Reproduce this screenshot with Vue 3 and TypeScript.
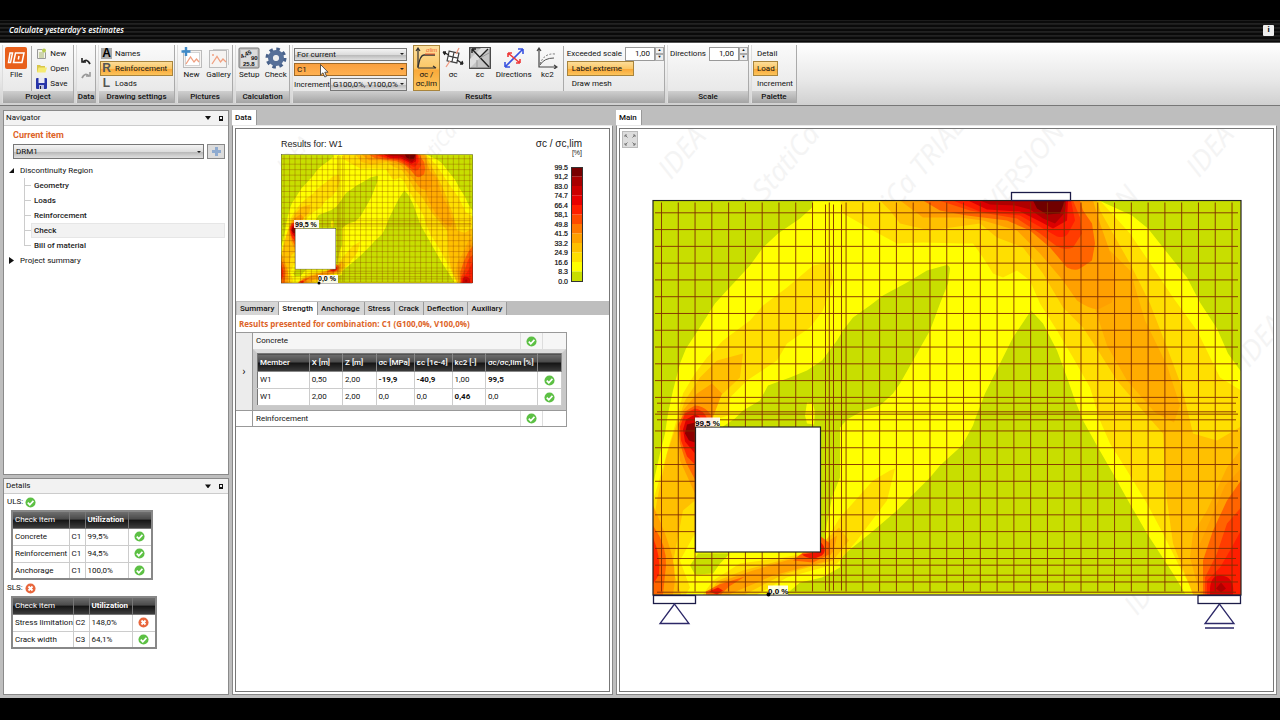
<script setup lang="ts">
import { ref } from 'vue'

type Cell = { text: string; bold?: boolean }
type Check = { name: string; combo: string; value: string; ok: boolean }
type Band = { fill: string; d: string }

const titleNote = "Calculate yesterday's estimates"
const exceeded = ref('1,00')
const directions = ref('1,00')
const scope = ref('For current')
const combination = ref('C1')
const increment = ref('G100,0%, V100,0%')
const item = ref('DRM1')

const regionItems = ['Geometry', 'Loads', 'Reinforcement', 'Check', 'Bill of material']
const resultTabs = ['Summary', 'Strength', 'Anchorage', 'Stress', 'Crack', 'Deflection', 'Auxiliary']

const uls: Check[] = [
  { name: 'Concrete', combo: 'C1', value: '99,5%', ok: true },
  { name: 'Reinforcement', combo: 'C1', value: '94,5%', ok: true },
  { name: 'Anchorage', combo: 'C1', value: '100,0%', ok: true },
]
const sls: Check[] = [
  { name: 'Stress limitation', combo: 'C2', value: '148,0%', ok: false },
  { name: 'Crack width', combo: 'C3', value: '64,1%', ok: true },
]
const details = [
  { label: 'ULS:', ok: true, rows: uls, kind: 'uls' },
  { label: 'SLS:', ok: false, rows: sls, kind: 'sls' },
]

const strengthHead = ['Member', 'X [m]', 'Z [m]', 'σc [MPa]', 'εc [1e-4]', 'kc2 [-]', 'σc/σc,lim [%]', '']
const strengthRows: Cell[][] = [
  [{ text: 'W1' }, { text: '0,50' }, { text: '2,00' }, { text: '-19,9', bold: true }, { text: '-40,9', bold: true }, { text: '1,00' }, { text: '99,5', bold: true }],
  [{ text: 'W1' }, { text: '2,00' }, { text: '2,00' }, { text: '0,0' }, { text: '0,0' }, { text: '0,46', bold: true }, { text: '0,0' }],
]

const legendLabels = ['99.5', '91,2', '83.0', '74.7', '66.4', '58,1', '49.8', '41.5', '33.2', '24.9', '16.6', '8.3', '0.0']
const legendColors = ['#780000', '#a80000', '#cc0000', '#e80000', '#ff1e00', '#ff4a00', '#ff7800', '#ffa000', '#ffc000', '#ffdf00', '#ffff00', '#c8de00']

const green = '#c8de00'
const bands: Band[] = [
  { fill: green, d: 'M0 0H160L159 7 147 18 125 33 110 47 97 65 72 92 62 103 43 133 33 148 27 163 20 190 15 213 12 233 7 253 2 275 0 285Z' },
  { fill: green, d: 'M446 0L479 15 495 28 514 52 534 77 547 102 564 128 575 153 588 171V0Z' },
  { fill: green, d: 'M297 68Q296 64 292 65L274 70 254 82 230 95 217 105 200 117 190 130 184 140 169 160 154 170 137 177 115 185 107 200 90 210 82 218 70 226V230H167L168 340 172 340 174 323 179 297 187 277V227L194 219 210 210 227 205 240 193 247 183 260 160 277 130 287 103 295 83Z' },
  { fill: '#ffff00', d: 'M154 202L160 203 162 212 161 224 154 223 152 215Z' },
  { fill: green, d: 'M378 110L360 137 345 167 332 193 322 219 320 225 309 245 287 265 277 277 244 310 217 333 187 357V367L169 377 147 382 134 393H532L520 373 494 333 475 300 460 273 445 247 430 220 422 200 414 177 404 150 390 123Z' },
  { fill: '#ffdf00', d: 'M177 62L160 65 134 87 110 105 97 120 70 140 54 157 42 173 30 193 24 218 16 245 7 277 0 300V394H33L37 387 27 360 42 333V226L75 215 77 197 94 180 124 160 134 143 157 127 170 110 180 80Z' },
  { fill: green, d: 'M37 365L45 353H77L67 363 60 373 42 374Z' },
  { fill: '#ffc000', d: 'M90 153L64 160 47 177 32 200 25 220 14 253 4 300 0 325V394H28L19 367 30 310 42 300V226L70 193 87 177Z' },
  { fill: '#ffa000', d: 'M59 183L44 193 30 210 25 233 27 260 42 293V226L58 222 69 193Z' },
  { fill: '#ffa000', d: 'M0 305Q14 335 19 355T20 394H0Z' },
  { fill: '#ff6400', d: 'M0 325Q14 345 13 365L10 394H0Z' },
  { fill: '#ff2800', d: 'M0 337Q8 356 6 374L0 384Z' },
  { fill: '#ff6400', d: 'M42 205L32 211 25 224 27 243 33 262 42 279V226H62Q58 206 42 205Z' },
  { fill: '#ff2800', d: 'M42 208L32 213 27 226 28 240 34 256 42 264V226H56Q54 210 42 208Z' },
  { fill: '#dc0000', d: 'M42 214L33 219 30 229 32 241 42 253V226H50Q50 216 42 214Z' },
  { fill: '#8c0000', d: 'M42 222L34 224 32 233 36 240 42 242Z' },
  { fill: '#ffdf00', d: 'M242 268L237 270 220 280 187 317 177 333 167 350 130 357 87 363 60 380 50 394H104L134 377 184 363 204 340 234 300Z' },
  { fill: '#ffc000', d: 'M186 327L172 340 167 352 135 358 90 370 65 380 55 394H92L130 374 180 360 196 340Z' },
  { fill: '#ffa000', d: 'M184 335L168 345 140 358 100 370 68 381 58 394H76L120 375 172 361 181 350Z' },
  { fill: '#ff6400', d: 'M168 336L177 343 176 354 160 362 140 360 150 352 168 351ZM53 391L66 384 92 376 76 386 68 394H53Z' },
  { fill: '#f01400', d: 'M168 342Q175 350 169 355 158 361 149 354L168 351ZM56 391L65 387 70 390 64 394Z' },
  { fill: '#ffdf00', d: 'M187 0L190 13 220 30 244 43 270 42 307 43 320 43 330 57 340 73 350 77 364 70 377 80 387 103 404 130 420 157 437 187 447 220 457 243 474 270 494 303 510 333 527 367 542 394H588V190L567 177 544 130 520 97 500 67 477 33 447 0Z' },
  { fill: '#ffc000', d: 'M227 0L237 10 247 23 277 30 327 23 344 37 370 47 390 73 410 107 430 127 447 153 464 180 487 207 510 233 514 300 520 343 540 394H588V226L564 240 540 233 529 187 514 147 497 103 477 63 460 33 447 10 444 0Z' },
  { fill: '#ffac00', d: 'M457 50L477 70 492 120 514 165 527 205 521 222 502 212 474 180 454 145 442 108ZM587 250L574 267 554 310 540 333 537 357 547 394H588Z' },
  { fill: '#ffa000', d: 'M247 0L270 17 307 17 330 20 364 30 387 53 410 80 424 100Q440 111 447 108L459 102 462 87 459 57 447 23 440 0ZM588 268L572 285 557 320 544 350 548 394H588Z' },
  { fill: '#ff6400', d: 'M270 0L287 10 314 15 354 20 377 30 397 47 414 67Q422 71 427 68L439 60 442 43 439 23 430 10 427 0ZM588 280L574 300 560 330 550 360V394H588Z' },
  { fill: '#ff3c00', d: 'M286 0L317 10 364 18 387 33 404 46Q412 50 420 47L429 33 427 17 420 0ZM588 307L574 323 564 353 552 377V394H588Z' },
  { fill: '#ff1e00', d: 'M300 0L327 11 367 15 390 28 404 36Q412 38 415 33L422 20 418 0ZM588 330L577 350 567 367 554 380V394H588Z' },
  { fill: '#dc0000', d: 'M315 0L334 9 367 11 387 21 400 28 414 20 415 0ZM557 394Q556 374 568 375 582 376 580 394Z' },
  { fill: '#b00000', d: 'M327 0L337 4 362 5 377 9 390 18 402 23 412 12 413 0ZM563 388L568 382 573 388 568 392Z' },
  { fill: '#700000', d: 'M380 0L384 8 394 14 407 13 412 0Z' },
]

const step = 16.78
const regularX = Array.from({ length: 35 }, (_, i) => 8.5 + i * step)
const regularY = Array.from({ length: 23 }, (_, i) => 12.3 + i * step)
const extraX = [172.5, 180.5, 188.5]
const extraY = [202.7, 211.3, 219.3, 358, 374.7, 391.7]

const watermarks = [
  { x: 52, y: 52, t: 'IDEA' }, { x: 105, y: 122, t: 'IDEA StatiCa' }, { x: 243, y: 122, t: 'StatiCa TRIAL' },
  { x: 378, y: 86, t: 'VERSION' }, { x: 452, y: 150, t: 'VERSION' }, { x: 580, y: 50, t: 'IDEA' }, { x: 330, y: 330, t: 'IDEA StatiCa' },
  { x: 455, y: 430, t: 'IDEA StatiCa' }, { x: 518, y: 488, t: 'IDEA StatiCa' }, { x: 630, y: 240, t: 'IDEA' },
]
</script>

<template>
  <div class="app">
    <svg class="defs" aria-hidden="true">
      <defs>
        <symbol id="ok" viewBox="0 0 12 12">
          <circle cx="6" cy="6" r="5.5" fill="#5cc044" />
          <path d="M3 6.2 5.2 8.4 9.2 4.2" fill="none" stroke="#fff" stroke-width="1.8" />
        </symbol>
        <symbol id="bad" viewBox="0 0 12 12">
          <circle cx="6" cy="6" r="5.5" fill="#e8663c" />
          <path d="M3.8 3.8 8.2 8.2M8.2 3.8 3.8 8.2" stroke="#fff" stroke-width="2" />
        </symbol>
        <symbol id="wall" viewBox="-1 -1 590 397">
          <rect width="588" height="394" fill="#ffff00" />
          <path v-for="(b, i) in bands" :key="i" :d="b.d" :fill="b.fill" />
          <g stroke="#802c00" stroke-opacity=".9">
            <line v-for="x in regularX" :key="x" :x1="x" :x2="x" y1="2" y2="391" />
            <line v-for="x in extraX" :key="x" :x1="x" :x2="x" y1="4" y2="390" />
            <line v-for="y in regularY" :key="y" x1="2" x2="585" :y1="y" :y2="y" />
            <line v-for="y in extraY" :key="y" x1="4" x2="583" :y1="y" :y2="y" />
          </g>
          <rect width="588" height="394.500" fill="none" stroke="#222" stroke-width="1.2" />
          <rect x="42.5" y="226.5" width="125" height="125" fill="#fff" stroke="#222" stroke-width="1.2" />
        </symbol>
      </defs>
    </svg>

    <header class="titlebar">
      <span class="note">{{ titleNote }}</span>
      <button class="info" aria-label="Information">i</button>
    </header>

    <nav class="ribbon">
      <section class="group project">
        <div class="body">
          <button class="big">
            <svg width="22" height="22" viewBox="0 0 22 22"><rect width="22" height="22" rx="2" fill="#e8601c" /><path d="M5 6H7.500L5.500 15.500H3.500ZM10.500 6H19L17 15.500H8.500ZM14 9 13.300 12.500" fill="none" stroke="#fff" stroke-width="1.500" /></svg>
            File
          </button>
          <div class="stack ruled">
            <button class="small"><svg width="11" height="11" viewBox="0 0 11 11"><path d="M1.500 1.500H6L9.500 4.500V10.500H1.500Z" fill="#f4f4ea" stroke="#999" /><path d="M3 5H8M3 7H8M3 9H8" stroke="#a7b570" /><circle cx="8" cy="2.500" r="2" fill="#b8cc50" /></svg>New</button>
            <button class="small"><svg width="11" height="11" viewBox="0 0 11 11"><path d="M1 2H4L5 3H9V9H1Z" fill="#d8c64a" /><path d="M2.500 4.500H11L9.500 9.500H1Z" fill="#f5ea72" /></svg>Open</button>
            <button class="small"><svg width="11" height="11" viewBox="0 0 11 11"><rect width="11" height="11" rx="1" fill="#2734a8" /><rect x="2.500" width="6" height="5" fill="#e8e8f4" /><rect x="3" y="7" width="5" height="4" fill="#b8bce0" /><rect x="4" y="8" width="1" height="3" fill="#222" /></svg>Save</button>
          </div>
        </div>
        <h3>Project</h3>
      </section>

      <section class="group data">
        <div class="body undo">
          <button aria-label="Undo"><svg width="10" height="9" viewBox="0 0 10 9"><path d="M1 1V5H5" fill="none" stroke="#222" stroke-width="1.600" /><path d="M2 5Q6 1 9 7" fill="none" stroke="#222" stroke-width="1.800" /></svg></button>
          <button aria-label="Redo"><svg width="10" height="9" viewBox="0 0 10 9"><path d="M9 1V5H5" fill="none" stroke="#999" stroke-width="1.600" /><path d="M8 5Q4 1 1 7" fill="none" stroke="#999" stroke-width="1.800" /></svg></button>
        </div>
        <h3>Data</h3>
      </section>

      <section class="group drawing">
        <div class="body stack">
          <button class="small"><span class="glyph boxed">A</span>Names</button>
          <button class="small on"><span class="glyph">R</span>Reinforcement</button>
          <button class="small"><span class="glyph">L</span>Loads</button>
        </div>
        <h3>Drawing settings</h3>
      </section>

      <section class="group pictures">
        <div class="body">
          <button class="big"><svg width="22" height="22" viewBox="0 0 22 22"><rect x="2.500" y="3.500" width="18" height="17" fill="#f6f4f2" stroke="#bbb" /><rect x="4.500" y="5.500" width="14" height="13" fill="#fff" stroke="#d4d4d4" /><path d="M5 17 9.500 10 13 15 15.500 12 18 15" fill="none" stroke="#f0a080" stroke-width="1.300" /><path d="M5 0V9M0.500 4.500H9.500" stroke="#3f8ac8" stroke-width="2.400" /></svg>New</button>
          <button class="big"><svg width="22" height="22" viewBox="0 0 22 22"><path d="M5 2.500H20.500V18" fill="none" stroke="#ccc" /><rect x="1.500" y="3.500" width="17" height="17" fill="#f6f4f2" stroke="#bbb" /><path d="M4 17 9 9.500 12.500 15 15 12 18 15" fill="none" stroke="#f0a080" stroke-width="1.300" /><circle cx="5" cy="8" r="1" fill="#f0a080" /></svg>Gallery</button>
        </div>
        <h3>Pictures</h3>
      </section>

      <section class="group calculation">
        <div class="body">
          <button class="big"><svg width="22" height="22" viewBox="0 0 22 22"><rect x="1" y="1" width="20" height="20" rx="1" fill="#c4c4c4" stroke="#777" /><rect x="3" y="3" width="16" height="16" fill="#dcdcdc" /><g font-family="Liberation Sans" font-weight="bold" font-size="6" fill="#111"><text x="3" y="11" transform="rotate(-28 5 10)">4,45</text><text x="13" y="13">90</text><text x="5" y="19">25.8</text></g></svg>Setup</button>
          <button class="big"><svg width="22" height="22" viewBox="0 0 22 22"><circle cx="11" cy="11" r="8.500" fill="none" stroke="#48618a" stroke-width="4" stroke-dasharray="3.340 3.340" /><circle cx="11" cy="11" r="5.500" fill="none" stroke="#566f98" stroke-width="5" /><circle cx="11" cy="11" r="2.500" fill="#eee" /></svg>Check</button>
        </div>
        <h3>Calculation</h3>
      </section>

      <section class="group results">
        <div class="body">
          <div class="picks">
            <div class="pick"><select v-model="scope" aria-label="Scope"><option>For current</option></select></div>
            <div class="pick hot"><select v-model="combination" aria-label="Combination"><option>C1</option></select>
              <svg class="cursor" width="9" height="14" viewBox="0 0 9 14"><path d="M.5.5V11L3 8.800 4.800 13 6.500 12.300 4.800 8.200H8Z" fill="#fff" stroke="#333" stroke-width=".8" /></svg>
            </div>
            <div class="pick inc"><label for="increment">Increment</label><div class="pick"><select id="increment" v-model="increment"><option>G100,0%, V100,0%</option></select></div></div>
          </div>
          <button class="big tall on"><svg width="22" height="22" viewBox="0 0 22 22"><path d="M3 21V1M3 21H21M1 4 3 1 5 4M18 19 21 21" fill="none" stroke="#333" stroke-width="1.200" /><path d="M3 20Q5 8 9 8H20" fill="none" stroke="#333" stroke-width="1.400" /><path d="M10 7H20" stroke="#ee5a30" /><text x="11" y="5" font-family="Liberation Sans" font-size="6" fill="#ee5a30">σlim</text></svg>σc /<br />σc,lim</button>
          <button class="big"><svg width="22" height="22" viewBox="0 0 22 22"><path d="M6 5H16V15H6ZM11 5V15M6 10H16" transform="rotate(12 11 10)" fill="#fff" stroke="#444" stroke-width="1.200" /><path d="M1 5 7 8M21 17 15 13M1 5H4M1 5 3 8M21 17H18M21 17 20 14" stroke="#222" stroke-width="1.300" fill="none" /><path d="M4 20 8 14M17 1 14 7" stroke="#f09a80" stroke-width="1.300" /></svg>σc</button>
          <button class="big"><svg width="22" height="22" viewBox="0 0 22 22"><rect x=".7" y=".7" width="20.600" height="20.600" fill="#c4c4c4" stroke="#444" stroke-width="1.300" /><path d="M1 12 12 1H21L1 21Z" fill="#dedede" /><path d="M3 2 20 20M3 2H7M3 2V6M11 10 19 2" stroke="#222" stroke-width="1.400" fill="none" /><path d="M11 11 20 6M8 13V20" stroke="#999" fill="none" /></svg>εc</button>
          <button class="big wide"><svg width="22" height="22" viewBox="0 0 22 22"><path d="M2 20 20 2M2 20V15M2 20H7M20 2H15M20 2V7" stroke="#3a54e0" stroke-width="1.600" fill="none" /><path d="M5 6 17 16M5 6V10M5 6H9M17 16V12M17 16H13" stroke="#ee3a3a" stroke-width="1.600" fill="none" /></svg>Directions</button>
          <button class="big"><svg width="22" height="22" viewBox="0 0 22 22"><path d="M3 1V20H21M1 4 3 1 5 4M18 18 21 20 18 22" fill="none" stroke="#444" stroke-width="1.200" /><path d="M4 18Q8 11 18 11" fill="none" stroke="#555" /><path d="M4 17Q8 6 19 7" fill="none" stroke="#777" stroke-dasharray="2 1.500" /></svg>kc2</button>
          <div class="stack ruled extremes">
            <div class="spin"><label for="exceeded">Exceeded scale</label><input id="exceeded" v-model="exceeded" /><span class="arrows"><button aria-label="Increase scale">▲</button><button aria-label="Decrease scale">▼</button></span></div>
            <button class="small on">Label extreme</button>
            <button class="small">Draw mesh</button>
          </div>
        </div>
        <h3>Results</h3>
      </section>

      <section class="group scale">
        <div class="body">
          <div class="spin"><label for="directions">Directions</label><input id="directions" v-model="directions" /><span class="arrows"><button aria-label="Increase directions">▲</button><button aria-label="Decrease directions">▼</button></span></div>
        </div>
        <h3>Scale</h3>
      </section>

      <section class="group palette">
        <div class="body stack">
          <button class="small">Detail</button>
          <button class="small on">Load</button>
          <button class="small">Increment</button>
        </div>
        <h3>Palette</h3>
      </section>
    </nav>

    <main class="work">
      <div class="left">
        <section class="panel navigator">
          <header><h2>Navigator</h2><button class="tri" aria-label="Panel menu"></button><button class="pin" aria-label="Pin panel"></button></header>
          <h4>Current item</h4>
          <div class="itemrow">
            <div class="pick drm"><select v-model="item" aria-label="Current item"><option>DRM1</option></select></div>
            <button class="add" aria-label="Add item"><svg width="9" height="9" viewBox="0 0 9 9"><path d="M4.500 0V9M0 4.500H9" stroke="#8fabd0" stroke-width="3" /></svg></button>
          </div>
          <ul class="tree">
            <li><span class="node open">Discontinuity Region</span>
              <ul>
                <li v-for="r in regionItems" :key="r" :class="{ current: r === 'Check' }"><a href="#">{{ r }}</a></li>
              </ul>
            </li>
            <li><span class="node">Project summary</span></li>
          </ul>
        </section>

        <section class="panel details">
          <header><h2>Details</h2><button class="tri" aria-label="Panel menu"></button><button class="pin" aria-label="Pin panel"></button></header>
          <div v-for="d in details" :key="d.label" class="limit">
            <p>{{ d.label }} <svg width="11" height="11"><use :href="d.ok ? '#ok' : '#bad'" /></svg></p>
            <table :class="['checks', d.kind]">
              <thead><tr><th>Check item</th><th></th><th class="b">Utilization</th><th></th></tr></thead>
              <tbody>
                <tr v-for="r in d.rows" :key="r.name">
                  <td>{{ r.name }}</td><td>{{ r.combo }}</td><td>{{ r.value }}</td>
                  <td class="mark"><svg width="11" height="11"><use :href="r.ok ? '#ok' : '#bad'" /></svg></td>
                </tr>
              </tbody>
            </table>
          </div>
        </section>
      </div>

      <section class="dock">
        <div class="tabs"><button class="tab active">Data</button></div>
        <div class="frame">
          <div class="sheet">
            <figure class="preview">
              <svg viewBox="0 0 373 172" preserveAspectRatio="xMidYMid meet">
                <g class="mark-text" font-size="20">
                  <text x="50" y="45" transform="rotate(-50 50 45)">IDEA</text><text x="182" y="50" transform="rotate(-50 182 50)">StatiCa</text>
                </g>
                <text x="45" y="18" font-size="9" fill="#222">Results for: W1</text>
                <use href="#wall" x="45" y="25" width="192" height="130" />
                <rect x="58" y="91" width="25" height="8" fill="#fff" opacity=".9" />
                <text x="59" y="98" font-size="7" font-weight="bold">99,5 %</text>
                <rect x="82" y="146" width="20" height="8" fill="#fff" opacity=".9" />
                <text x="82" y="152" font-size="7" font-weight="bold">0,0 %</text>
                <circle cx="83" cy="154" r="1.500" />
                <text x="346" y="18" font-size="10" text-anchor="end" fill="#222">σc / σc,lim</text>
                <text x="346" y="26" font-size="7" text-anchor="end" fill="#222">[%]</text>
                <rect v-for="(c, i) in legendColors" :key="c" x="335" :y="38 + i * 9.5" width="12" height="9.6" :fill="c" />
                <rect x="335.500" y="38.500" width="11" height="114" fill="none" stroke="#333" />
                <text v-for="(l, i) in legendLabels" :key="l" x="332" :y="40.500 + i * 9.5" font-size="7" text-anchor="end" stroke="#222" stroke-width=".2">{{ l }}</text>
              </svg>
            </figure>
            <div class="tabs sub"><button v-for="t in resultTabs" :key="t" :class="['tab', { active: t === 'Strength' }]">{{ t }}</button></div>
            <p class="combo">Results presented for combination: C1 (G100,0%, V100,0%)</p>
            <div class="results-grid">
              <div class="gutter">›</div>
              <div class="row"><span>Concrete</span><span class="cell"><svg width="11" height="11"><use href="#ok" /></svg></span><span class="cell last"></span></div>
              <div class="nest">
                <table class="strength">
                  <thead><tr><th v-for="h in strengthHead" :key="h">{{ h }}</th></tr></thead>
                  <tbody>
                    <tr v-for="(row, i) in strengthRows" :key="i">
                      <td v-for="(c, j) in row" :key="j" :class="{ b: c.bold }">{{ c.text }}</td>
                      <td class="mark"><svg width="11" height="11"><use href="#ok" /></svg></td>
                    </tr>
                  </tbody>
                </table>
              </div>
              <div class="gutter second"></div>
              <div class="row second"><span>Reinforcement</span><span class="cell"><svg width="11" height="11"><use href="#ok" /></svg></span><span class="cell last"></span></div>
            </div>
          </div>
        </div>
      </section>

      <section class="dock">
        <div class="tabs"><button class="tab active">Main</button></div>
        <div class="frame">
          <div class="sheet canvas">
            <svg class="plot" viewBox="1 1 653 561" preserveAspectRatio="xMidYMid meet">
              <g class="mark-text" font-size="28"><text v-for="w in watermarks" :key="w.x" :x="w.x" :y="w.y" :transform="`rotate(-50 ${w.x} ${w.y})`">{{ w.t }}</text></g>
              <use href="#wall" x="33" y="71" width="590" height="397" />
              <g fill="#fff" stroke="#1c1c48" stroke-width="1.300">
                <rect x="392.500" y="64" width="59" height="8" />
                <rect x="34.500" y="467" width="42" height="8" />
                <path d="M55.500 475.500 41 495H70ZM600.500 475.500 586 495H615ZM586 499.500H615" stroke="#2c2868" />
                <rect x="579" y="467" width="42.500" height="8" />
              </g>
              <rect x="76" y="289" width="25" height="9" fill="#fff" opacity=".9" />
              <text x="76" y="297" font-size="8" font-weight="bold">99,5 %</text>
              <rect x="149" y="457" width="20" height="9" fill="#fff" opacity=".9" />
              <text x="149" y="465" font-size="8" font-weight="bold">0,0 %</text>
              <circle cx="149.500" cy="466" r="2" />
            </svg>
            <button class="fit" aria-label="Zoom to fit"><svg width="12" height="12" viewBox="0 0 12 12"><path d="M1 3V1H3M1 1 3.500 3.500M9 1H11V3M11 1 8.500 3.500M1 9V11H3M1 11 3.500 8.500M9 11H11V9M11 11 8.500 8.500" fill="none" stroke="#777" /></svg></button>
          </div>
        </div>
      </section>
    </main>
  </div>
</template>

<style>
body { margin: 0; background: #000; }
</style>

<style scoped>
* { box-sizing: border-box; }
.app { height: 100vh; display: flex; flex-direction: column; background: #000; padding: 20px 0 22px; font: 400 8px/10px Roboto, "Open Sans", sans-serif; color: #111; overflow: hidden; }
.defs { position: absolute; width: 0; height: 0; }
button, input, select { font: inherit; color: inherit; margin: 0; padding: 0; border: 0; background: none; border-radius: 0; }
h2, h3, h4, p, ul, figure { margin: 0; padding: 0; font: inherit; }
svg { display: block; flex: none; }

.titlebar { flex: 0 0 23px; display: flex; align-items: center; justify-content: space-between; padding: 0 6px 2px 9px; background: repeating-linear-gradient(#1c1c1c 0 1px, #0a0a0a 1px 3px, #222 3px 4px); border-bottom: 1px solid #555; }
.note { color: #fff; font: italic 600 8px/10px "Open Sans", sans-serif; }
.info { width: 11px; height: 11px; background: #eee; border-radius: 1px; font-weight: 800; color: #111; }

.ribbon { flex: 0 0 63px; display: flex; gap: 2px; padding: 2px 2px 2px; background: linear-gradient(#fff, #e8e8e8 60%, #d0d0d0); border-bottom: 1px solid #777; }
.group { flex: none; display: flex; flex-direction: column; border-right: 1px solid #aaa; border-left: 1px solid #ddd; background: linear-gradient(#fafafa, #e4e4e4); }
.group h3 { flex: 0 0 11px; text-align: center; line-height: 12px; font-weight: 500; background: linear-gradient(#cfcfcf, #a4a4a4); color: #111; }
.body { flex: 1; display: flex; min-height: 0; }
.project { width: 72px; } .data { width: 20px; } .drawing { width: 77px; } .pictures { width: 56px; } .calculation { width: 55px; } .results { width: 373px; } .scale { width: 82px; } .palette { width: 46px; }
.big { width: 27px; display: flex; flex-direction: column; align-items: center; padding-top: 2px; gap: 1px; text-align: center; line-height: 9px; white-space: nowrap; }
.big.wide { width: 41px; }
.stack { display: flex; flex-direction: column; align-items: flex-start; }
.ruled { border-left: 1px solid #aaa; margin: 1px 0 0 2px; padding-left: 3px; }
.small { height: 15px; display: flex; align-items: center; gap: 3px; padding: 0 4px 0 1px; white-space: nowrap; }
.on { background: linear-gradient(#fde0a0, #fbc766 50%, #f9a93a 55%, #fcc860); box-shadow: inset 0 0 0 1px #a8843c; }
.undo { flex-direction: column; align-items: center; justify-content: center; gap: 5px; }
.drawing .body { padding: 1px 1px 0; }
.drawing .small { width: 100%; gap: 3px; }
.glyph { width: 11px; height: 11px; font: 700 12px/11px "Liberation Sans", sans-serif; color: #555; text-align: center; }
.boxed { background: #aaa; color: #000; }

.picks { width: 116px; display: flex; flex-direction: column; gap: 2px; padding: 3px 1px 0; }
.pick { position: relative; height: 13px; display: flex; align-items: center; }
.pick::after { content: ""; position: absolute; right: 3px; top: 5px; border: 2px solid transparent; border-top-color: #222; border-bottom: 0; }
.pick select { appearance: none; width: 100%; height: 100%; min-width: 0; padding: 0 7px 0 2px; border: 1px solid #777; background: linear-gradient(#f4f4f4, #ddd 50%, #b8b8b8 55%, #e0e0e0); line-height: 10px; }
.hot select { background: linear-gradient(#f9a040, #ffb050); border-color: #a06a28; }
.inc::after { content: none; }
.inc .pick { flex: 1; }
.cursor { position: absolute; left: 26px; top: 1px; z-index: 2; }
.tall { height: 46px; margin: 0 0 0 5px; }
.extremes { flex: 1; margin-left: 2px; }
.extremes .small { padding: 0 12px 0 5px; }
.spin { flex: 1; width: 100%; display: flex; align-items: center; height: 15px; gap: 3px; white-space: nowrap; }
.spin label { flex: 1; }
.spin input { width: 30px; height: 14px; background: #fff; border: 1px solid #999; text-align: right; padding-right: 4px; }
.arrows { display: flex; flex-direction: column; margin-left: -3px; }
.arrows button { width: 9px; height: 7px; border: 1px solid #aaa; background: #eee; font-size: 4px; line-height: 4px; display: block; }
.scale .body { align-items: flex-start; padding: 1px 1px 0 2px; }
.palette .body { padding-top: 1px; padding-left: 1px; }
.palette .small { padding: 0 3px 0 4px; }

.work { flex: 1; min-height: 0; display: grid; grid-template-columns: 226px minmax(0, 381fr) minmax(0, 661fr); gap: 3px; padding: 4px 3px 3px 3px; background: #bebebe; }
.left { display: flex; flex-direction: column; gap: 3px; min-height: 0; }
.panel { background: #fff; border: 1px solid #8a8a8a; min-height: 0; }
.navigator { flex: 366; } .details { flex: 216; }
.panel > header { height: 15px; display: flex; align-items: center; padding: 0 5px 0 2px; background: #f2f2f2; border-bottom: 1px solid #ccc; }
.panel h2 { flex: 1; color: #111; }
.tri { width: 6px; height: 4px; background: #111; clip-path: polygon(0 0, 100% 0, 50% 100%); margin-right: 8px; }
.pin { width: 4px; height: 5px; border: 1px solid #111; border-bottom-width: 2px; }
.navigator h4 { color: #dd6428; font-weight: 700; font-size: 9px; line-height: 12px; padding: 3px 9px; }
.itemrow { display: flex; gap: 3px; padding: 0 3px 0 9px; }
.drm { flex: 1; height: 15px; }
.drm::after { top: 7px; }
.add { width: 18px; height: 15px; border: 1px solid #888; background: #dcdcdc; display: grid; place-items: center; }
.tree { list-style: none; padding-top: 4px; }
.tree ul { list-style: none; margin-left: 20px; margin-right: 3px; }
.tree ul li { display: flex; height: 15px; align-items: center; font-weight: 500; border-left: 1px solid #ccc; }
.tree ul li:last-child { border-image: linear-gradient(#ccc 50%, transparent 50%) 1; }
.tree ul li::before { content: ""; width: 6px; border-top: 1px solid #ccc; }
.tree a { flex: 1; height: 15px; line-height: 15px; padding-left: 3px; color: #222; text-decoration: none; }
.tree .current a { background: #f2f2f2; border: 1px solid #e6e6e6; line-height: 13px; padding-left: 2px; }
.node { display: flex; align-items: center; height: 15px; padding-left: 5px; }
.node::before { content: ""; width: 5px; height: 7px; margin-right: 6px; background: #111; clip-path: polygon(0 0, 100% 50%, 0 100%); }
.node.open::before { height: 5px; clip-path: polygon(100% 0, 100% 100%, 0 100%); }

.limit p { display: flex; align-items: center; gap: 2px; height: 16px; padding-left: 3px; }
table { border-collapse: collapse; table-layout: fixed; }
.checks { margin-left: 7px; border: 2px solid #888; }
.checks th, .checks td { border-right: 1px solid #ccc; border-bottom: 1px solid #ccc; padding: 0 2px; text-align: left; height: 17px; font-weight: 400; white-space: nowrap; }
.checks th, .strength th { background: linear-gradient(#6e6e6e, #4a4a4a 45%, #141414 50%, #3c3c3c); color: #fff; border-color: #777; }
.checks th.b { font-weight: 700; }
.checks td.mark, .strength td.mark { padding: 0; }
.mark svg { margin: 0 auto; }
.checks th:nth-child(2) { width: 16px; } .checks th:nth-child(3) { width: 43px; } .checks th:nth-child(4) { width: 24px; }
.uls { width: 142px; } .sls { width: 146px; }

.dock { display: flex; flex-direction: column; min-width: 0; min-height: 0; }
.tabs { flex: 0 0 15px; display: flex; align-items: stretch; }
.tab { padding: 0 4px 0 3px; border-right: 1px solid #999; background: #d6d6d6; color: #111; font-weight: 500; white-space: nowrap; }
.tab.active { background: #fff; }
.frame { flex: 1; min-height: 0; padding: 2px; background: #fff; border: 1px solid #888; border-top-color: #e8e8e8; display: flex; }
.sheet { flex: 1; min-width: 0; border: 1px solid #777; background: #fff; }
.preview svg { display: block; width: 100%; height: 172px; font-family: "Liberation Sans", Arial, sans-serif; overflow: hidden; }
.mark-text { fill: #f4f4f4; font-family: "Open Sans", sans-serif; font-style: italic; font-weight: 400; }
.sub { height: 14px; background: #bebebe; padding-top: 1px; padding-left: 1px; }
.combo { color: #dd6428; font-family: "Open Sans", sans-serif; font-weight: 700; padding: 4px 3px 3px; }
.results-grid { display: grid; grid-template-columns: 17px 1fr; width: 331px; max-width: 100%; border: 1px solid #999; border-left: 0; }
.gutter { grid-row: span 2; background: #ececec; border-right: 1px solid #999; display: grid; place-items: center; font-size: 11px; }
.row { display: flex; height: 16px; align-items: center; padding-left: 3px; background: #f6f6f6; }
.row span:first-child { flex: 1; }
.cell { width: 23px; height: 100%; border-left: 1px solid #ddd; border-right: 1px solid #ddd; display: grid; place-items: center; }
.cell.last { border: 0; }
.second { grid-row: auto; border-top: 1px solid #999; background-color: #fff; height: 16px; }
.nest { border: 4px solid #c8c8c8; border-top: 4px solid #ddd; }
.strength { width: 100%; border: 1px solid #777; }
.strength th, .strength td { height: 17px; padding: 0 2px; text-align: left; font-weight: 400; border-right: 1px solid #ccc; border-bottom: 1px solid #ccc; white-space: nowrap; }
.strength th { font-weight: 500; border-color: #888; height: 18px; }
.strength td.b { font-weight: 700; }
.strength th:nth-child(1) { width: 17%; } .strength th:nth-child(2), .strength th:nth-child(3) { width: 11%; }
.strength th:nth-child(4), .strength th:nth-child(5) { width: 12.5%; } .strength th:nth-child(6) { width: 11%; } .strength th:nth-child(7) { width: 17%; }
.canvas { position: relative; }
.plot { width: 100%; height: 100%; font-family: "Liberation Sans", Arial, sans-serif; }
.fit { position: absolute; left: 2px; top: 2px; width: 16px; height: 17px; background: #ddd; border: 1px solid #bbb; display: grid; place-items: center; }
</style>
